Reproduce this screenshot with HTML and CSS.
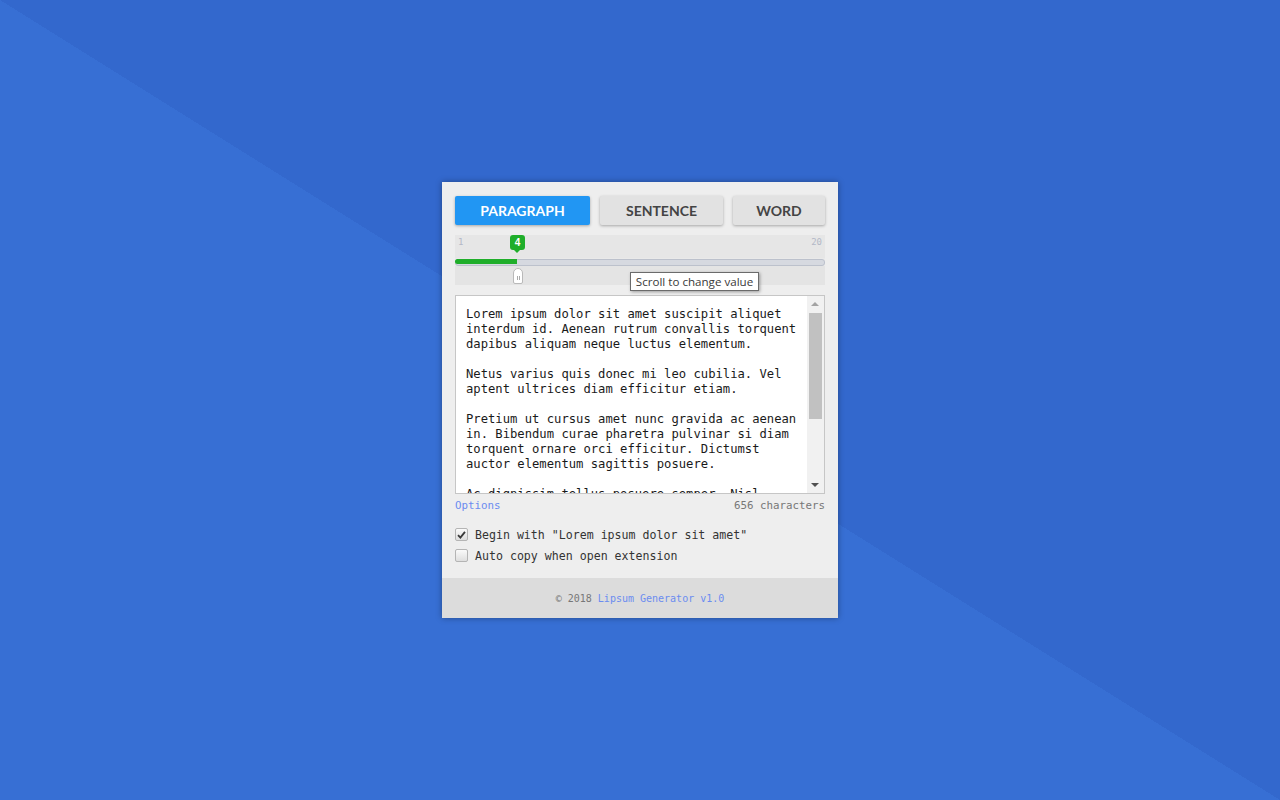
FILE: index.html
```html
<!DOCTYPE html>
<html>
<head>
<meta charset="utf-8">
<title>Lipsum Generator</title>
<link rel="stylesheet" href="styles.css">
</head>
<body>
<div class="stage">
  <div class="panel">
    <div class="main">
      <div class="tabs">
        <button class="tab tab-active tab-p">PARAGRAPH</button>
        <button class="tab tab-s">SENTENCE</button>
        <button class="tab tab-w">WORD</button>
      </div>

      <div class="slider">
        <div class="slider-top">
          <span class="lim">1</span>
          <span class="lim">20</span>
          <span class="bubble" style="left: 62px">4</span>
        </div>
        <div class="track">
          <div class="fill" style="width: 62px"></div>
        </div>
        <div class="slider-bottom">
          <span class="handle" style="left: 58px"><i></i><i></i></span>
        </div>
        <div class="tooltip">Scroll to change value</div>
      </div>

      <div class="textbox">
        <div class="text">
          <p>Lorem ipsum dolor sit amet suscipit aliquet interdum id. Aenean rutrum convallis torquent dapibus aliquam neque luctus elementum.</p>
          <p>Netus varius quis donec mi leo cubilia. Vel aptent ultrices diam efficitur etiam.</p>
          <p>Pretium ut cursus amet nunc gravida ac aenean in. Bibendum curae pharetra pulvinar si diam torquent ornare orci efficitur. Dictumst auctor elementum sagittis posuere.</p>
          <p>Ac dignissim tellus posuere semper. Nisl</p>
        </div>
        <div class="scrollbar">
          <span class="arrow arrow-up"></span>
          <span class="thumb"></span>
          <span class="sb-space"></span>
          <span class="arrow arrow-down"></span>
        </div>
      </div>

      <div class="meta">
        <a class="link">Options</a>
        <span class="count">656 characters</span>
      </div>

      <div class="checks">
        <label class="check">
          <span class="box box-on"><svg viewBox="0 0 12 12" width="12" height="12"><path d="M2.2 6.2 L4.8 8.8 L9.8 2.6" fill="none" stroke="#3a3a3a" stroke-width="2"/></svg></span>
          <span>Begin with "Lorem ipsum dolor sit amet"</span>
        </label>
        <label class="check">
          <span class="box"></span>
          <span>Auto copy when open extension</span>
        </label>
      </div>
    </div>
    <div class="footer">© 2018 <a class="link">Lipsum Generator v1.0</a></div>
  </div>
</div>
</body>
</html>
```

FILE: styles.css
```css
* { box-sizing: border-box; }
html, body { margin: 0; padding: 0; }
body {
  width: 1280px;
  height: 800px;
  overflow: hidden;
  background: linear-gradient(to top right, #376fd4 50%, #3368cd 50%);
  font-family: "DejaVu Sans Mono", monospace;
}
.stage {
  height: 800px;
  display: flex;
  align-items: center;
  justify-content: center;
}
.panel {
  width: 396px;
  height: 436px;
  background: #eeeeee;
  box-shadow: 0 0 6px rgba(0, 0, 0, 0.35);
  display: flex;
  flex-direction: column;
}
.main {
  flex: 1;
  padding: 14px 13px 0 13px;
  display: flex;
  flex-direction: column;
}
.tabs {
  display: flex;
  gap: 10px;
  height: 29px;
}
.tab {
  border: 0;
  border-radius: 2px;
  height: 29px;
  padding: 0 0 1px;
  font-family: Lato, "Liberation Sans", sans-serif;
  font-weight: 700;
  font-size: 14px;
  color: #444;
  background: #e2e2e2;
  box-shadow: 0 1px 3px rgba(0, 0, 0, 0.3);
}
.tab-p { width: 135px; }
.tab-s { width: 123px; }
.tab-w { width: 92px; }
.tab-active {
  background: #2196f3;
  color: #fff;
}

.slider {
  position: relative;
  margin-top: 10px;
  height: 50px;
  display: flex;
  flex-direction: column;
}
.slider-top {
  position: relative;
  height: 23px;
  background: #e6e6e6;
  display: flex;
  justify-content: space-between;
  padding: 1px 3px 0 3px;
}
.lim {
  font-size: 9px;
  color: #b3b8c6;
  line-height: 13px;
}
.bubble {
  position: absolute;
  top: 0;
  width: 15px;
  height: 15px;
  margin-left: -7px;
  border-radius: 3px;
  background: #1fae2a;
  color: #fff;
  font-family: "Liberation Sans", sans-serif;
  font-weight: 700;
  font-size: 10px;
  line-height: 15px;
  text-align: center;
}
.bubble::after {
  content: "";
  position: absolute;
  left: 4px;
  bottom: -3px;
  border-left: 3.5px solid transparent;
  border-right: 3.5px solid transparent;
  border-top: 3px solid #1fae2a;
}
.track {
  position: relative;
  height: 8px;
  background: #e9e9e9;
  padding: 1px 0 2px;
  display: flex;
}
.track::after {
  content: "";
  position: absolute;
  left: 0;
  right: 0;
  top: 1px;
  height: 5px;
  border-radius: 3px;
  background: #d6d9e0;
  border: 1px solid #bcc1cc;
}
.fill {
  position: relative;
  z-index: 1;
  height: 5px;
  background: #1fae2a;
  border-radius: 3px 0 0 3px;
}
.slider-bottom {
  position: relative;
  flex: 1;
  background: #e4e4e4;
}
.handle {
  position: absolute;
  top: 2px;
  width: 10px;
  height: 16px;
  background: #fff;
  border: 1px solid #b9b9b9;
  border-radius: 5px 5px 2px 2px;
  display: flex;
  gap: 1px;
  justify-content: center;
  align-items: center;
  padding-top: 4px;
}
.handle i {
  display: block;
  width: 1px;
  height: 4px;
  background: #aaa;
}
.tooltip {
  position: absolute;
  left: 175px;
  top: 37px;
  width: 129px;
  height: 19px;
  background: #fff;
  border: 1px solid #6b6b6b;
  box-shadow: 1px 1px 3px rgba(0, 0, 0, 0.35);
  font-family: "Open Sans", sans-serif;
  font-size: 11.6px;
  line-height: 17px;
  color: #3a3a3a;
  text-align: center;
  z-index: 5;
}

.textbox {
  margin-top: 10px;
  height: 199px;
  background: #fff;
  border: 1px solid #c6c6c6;
  display: flex;
  overflow: hidden;
}
.text {
  flex: 1;
  padding: 11px 0 0 10px;
  font-family: "DejaVu Sans Mono", monospace;
  font-size: 12.2px;
  line-height: 15px;
  color: #1a1a1a;
  overflow: hidden;
}
.text p {
  margin: 0 0 15px;
  width: 341px;
}
.scrollbar {
  width: 17px;
  background: #f1f1f1;
  display: flex;
  flex-direction: column;
  align-items: center;
}
.arrow {
  display: block;
  height: 17px;
  width: 17px;
  position: relative;
}
.arrow::after {
  content: "";
  position: absolute;
  left: 4px;
  border-left: 4px solid transparent;
  border-right: 4px solid transparent;
}
.arrow-up::after { top: 6px; border-bottom: 4px solid #a3a3a3; }
.arrow-down::after { top: 7px; border-top: 4px solid #505050; }
.thumb {
  display: block;
  width: 13px;
  height: 106px;
  background: #c1c1c1;
}
.sb-space { flex: 1; }

.meta {
  height: 22px;
  display: flex;
  justify-content: space-between;
  align-items: center;
  font-size: 10.8px;
}
.link { color: #6b8cf0; text-decoration: none; }
.count { color: #777; }

.checks {
  margin-top: 8px;
  display: flex;
  flex-direction: column;
}
.check {
  height: 21px;
  display: flex;
  align-items: center;
  gap: 7px;
  font-size: 11.6px;
  color: #333;
}
.box {
  width: 13px;
  height: 13px;
  border: 1px solid #b4b4b4;
  border-radius: 2px;
  background: linear-gradient(#fafafa, #dedede);
  display: flex;
  align-items: center;
  justify-content: center;
}
.box svg { display: block; }

.footer {
  height: 40px;
  background: #dcdcdc;
  display: flex;
  align-items: center;
  justify-content: center;
  gap: 0.6em;
  padding-top: 1px;
  font-size: 10px;
  color: #777;
}
```
